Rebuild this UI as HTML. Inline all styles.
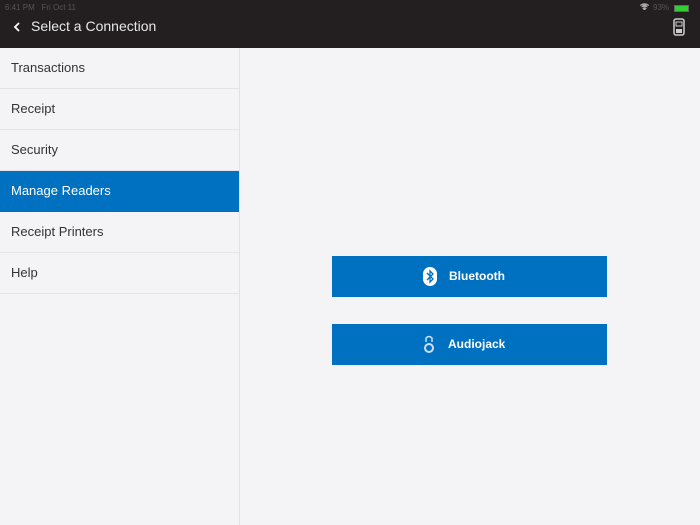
<!DOCTYPE html>
<html><head><style>
body{margin:0;width:700px;height:525px;background:#f4f4f6;font-family:"Liberation Sans",sans-serif;position:relative;overflow:hidden}
.top{position:absolute;left:0;top:0;width:700px;height:48px;background:#231f20}
.sb{position:absolute;top:3px;font-size:8px;color:#555}
.title{position:absolute;left:31px;top:18px;font-size:14px;color:#e8e8e8}
.side{position:absolute;left:0;top:48px;width:239px;height:477px;background:#f4f4f6;border-right:1px solid #e2e2e4}
.item{height:40px;border-bottom:1px solid #e4e4e6;font-size:13px;color:#333;line-height:40px;padding-left:11px}
.sel{background:#0070c0;color:#fff;border-bottom-color:#0070c0}
.btn{position:absolute;left:332px;width:275px;height:41px;background:#0070c0;color:#fff;font-weight:bold;font-size:12px}
</style></head><body>
<div class="top">
<div class="sb" style="left:5px">6:41 PM&nbsp;&nbsp; Fri Oct 11</div>
<div class="sb" style="left:653px">93%</div>
<div style="position:absolute;left:674px;top:5px;width:13px;height:5px;background:#3c3;border:1px solid #666"></div>
<svg style="position:absolute;left:640px;top:3px" width="9" height="7"><path d="M0 2.5Q4.5-1 9 2.5M1.5 4Q4.5 1.5 7.5 4M4.5 7L3 5.3Q4.5 4.3 6 5.3Z" stroke="#aaa" fill="#aaa" stroke-width="1"/></svg>
<svg style="position:absolute;left:13px;top:22px" width="8" height="10"><path d="M6 1L2 5L6 9" stroke="#fff" stroke-width="1.8" fill="none"/></svg>
<div class="title">Select a Connection</div>
<svg style="position:absolute;left:673px;top:18px" width="12" height="18"><rect x="1" y="1" width="10" height="16" rx="2" fill="none" stroke="#ccc" stroke-width="1.5"/><rect x="3" y="4" width="6" height="4" fill="none" stroke="#ccc"/><rect x="3" y="11" width="6" height="4" fill="#ccc"/></svg>
</div>
<div class="side">
<div class="item">Transactions</div>
<div class="item">Receipt</div>
<div class="item">Security</div>
<div class="item sel">Manage Readers</div>
<div class="item">Receipt Printers</div>
<div class="item">Help</div>
</div>
<div class="btn" style="top:256px">
<svg style="position:absolute;left:91px;top:11px" width="14" height="19"><rect x="0" y="0" width="14" height="19" rx="7" fill="#fff"/><path d="M4 6L10 12L7 15V4L10 7L4 13" stroke="#0070c0" stroke-width="1.3" fill="none"/></svg>
<span style="position:absolute;left:117px;top:13px">Bluetooth</span></div>
<div class="btn" style="top:324px">
<svg style="position:absolute;left:91px;top:11px" width="12" height="19"><path d="M3 7V3Q6 0 9 3V7" stroke="#cfe0f0" stroke-width="1.5" fill="none"/><circle cx="6" cy="13" r="4" stroke="#cfe0f0" stroke-width="2" fill="none"/></svg>
<span style="position:absolute;left:116px;top:13px">Audiojack</span></div>
</body></html>
